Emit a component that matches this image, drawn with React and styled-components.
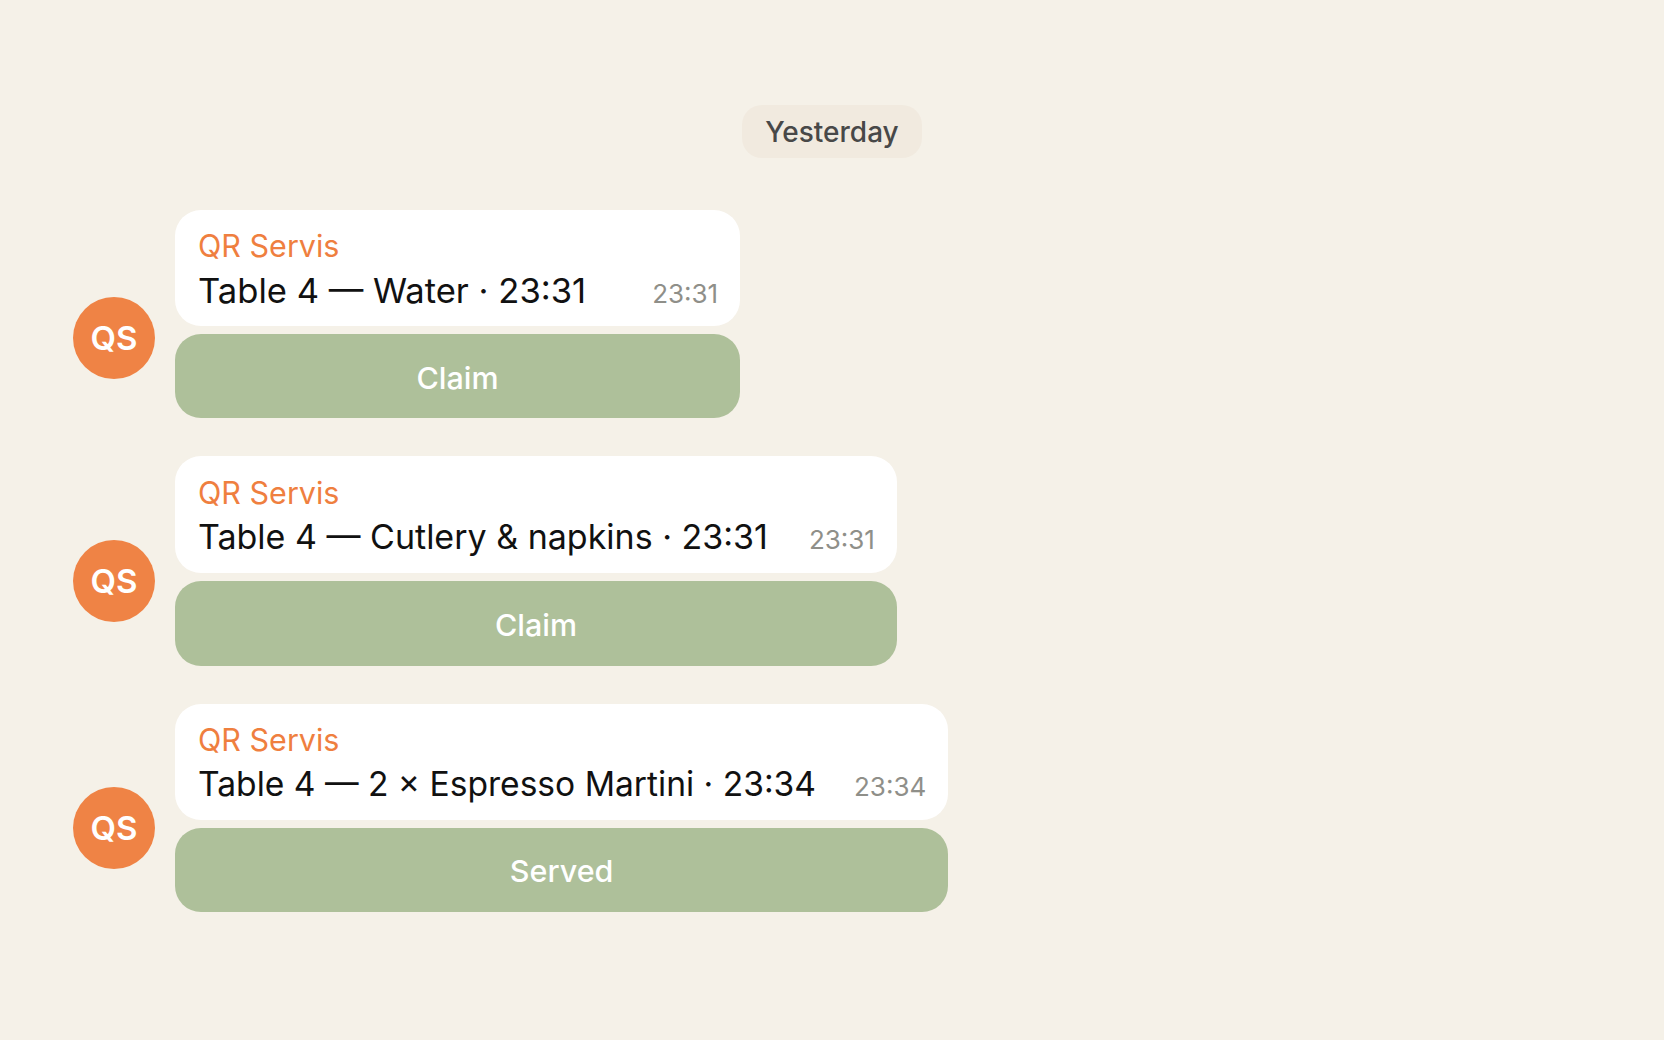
import React from "react";
import styled, { createGlobalStyle } from "styled-components";

const Global = createGlobalStyle`
  html, body { margin: 0; padding: 0; background: #f5f1e8; }
  body { font-family: Inter, "Noto Sans", sans-serif; }
`;

const Page = styled.div`
  width: 1664px;
  height: 1040px;
  box-sizing: border-box;
  padding: 105px 0 0 73px;
  background: #f5f1e8;
  overflow: hidden;
  display: flex;
  flex-direction: column;
`;

const DateRow = styled.div`
  display: flex;
  justify-content: center;
  margin: 0 0 52px -73px;
`;

const DatePill = styled.div`
  height: 53px;
  box-sizing: border-box;
  padding: 0 23px;
  display: flex;
  align-items: center;
  border-radius: 20px;
  background: #f1eadf;
  color: #484848;
  font-size: 28px;
  font-weight: 500;
`;

const Thread = styled.div`
  display: flex;
  flex-direction: column;
  gap: 38px;
`;

const Row = styled.div`
  display: flex;
  align-items: flex-end;
  gap: 20px;
`;

const Avatar = styled.div`
  flex: none;
  width: 82px;
  height: 82px;
  margin-bottom: ${(p) => p.$lift}px;
  border-radius: 50%;
  background: #ef8345;
  color: #ffffff;
  font-size: 33px;
  font-weight: 600;
  display: flex;
  align-items: center;
  justify-content: center;
`;

const Group = styled.div`
  display: flex;
  flex-direction: column;
  gap: 8px;
`;

const Bubble = styled.div`
  height: ${(p) => p.$height}px;
  box-sizing: border-box;
  padding: ${(p) => p.$top}px 22px 0 23px;
  border-radius: 26px;
  background: #ffffff;
`;

const Sender = styled.div`
  color: #ef7f3f;
  font-size: 30.5px;
  line-height: 36px;
`;

const Body = styled.div`
  display: flex;
  align-items: baseline;
  justify-content: space-between;
  gap: ${(p) => p.$gap}px;
  margin-top: 5px;
`;

const Message = styled.span`
  color: #111111;
  font-size: ${(p) => p.$size}px;
  line-height: 42px;
`;

const Time = styled.span`
  color: #8f8f89;
  font-size: 26px;
`;

const Action = styled.button`
  height: ${(p) => p.$height}px;
  border: 0;
  padding: ${(p) => p.$nudge}px 0 0;
  border-radius: 26px;
  background: #aec09a;
  color: #ffffff;
  font: inherit;
  font-size: 30.5px;
  font-weight: 500;
`;

const messages = [
  { text: "Table 4 — Water · 23:31", time: "23:31", action: "Claim", lift: 39, size: 34.6, gap: 66, top: 18, bubble: 116, button: 84, nudge: 2 },
  { text: "Table 4 — Cutlery & napkins · 23:31", time: "23:31", action: "Claim", lift: 44, size: 34, gap: 41, top: 19, bubble: 117, button: 85, nudge: 2 },
  { text: "Table 4 — 2 × Espresso Martini · 23:34", time: "23:34", action: "Served", lift: 43, size: 33.6, gap: 38, top: 18, bubble: 116, button: 84, nudge: 0 },
];

export default function App() {
  return (
    <Page>
      <Global />
      <DateRow>
        <DatePill>Yesterday</DatePill>
      </DateRow>
      <Thread>
        {messages.map((m) => (
          <Row key={m.text}>
            <Avatar $lift={m.lift}>QS</Avatar>
            <Group>
              <Bubble $height={m.bubble} $top={m.top}>
                <Sender>QR Servis</Sender>
                <Body $gap={m.gap}>
                  <Message $size={m.size}>{m.text}</Message>
                  <Time>{m.time}</Time>
                </Body>
              </Bubble>
              <Action $height={m.button} $nudge={m.nudge}>{m.action}</Action>
            </Group>
          </Row>
        ))}
      </Thread>
    </Page>
  );
}
